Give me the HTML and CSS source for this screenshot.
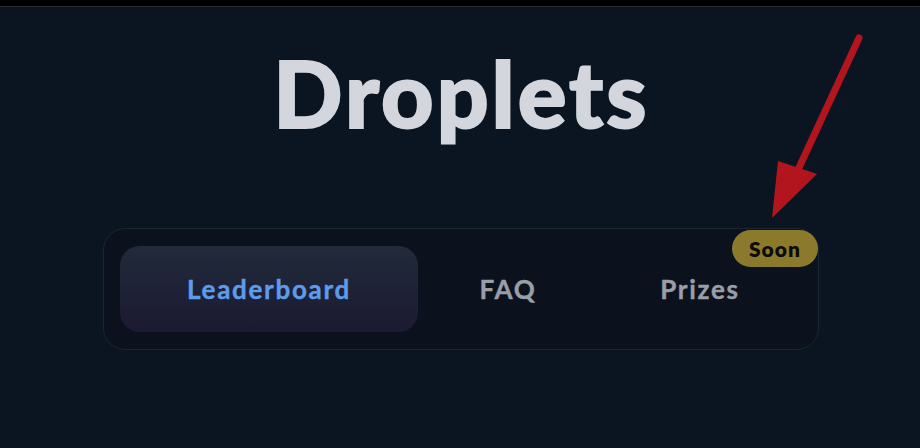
FILE: index.html
```html
<!DOCTYPE html>
<html lang="en">
<head>
  <meta charset="UTF-8" />
  <meta name="viewport" content="width=device-width, initial-scale=1.0"/>
  <title>Droplets</title>
  <link rel="stylesheet" href="styles.css">
</head>
<body>
  <div class="topbar"></div>

  <main class="page">
    <h1 class="title">Droplets</h1>

    <nav class="tabs">
      <a class="tab tab-wide active" href="#">Leaderboard</a>
      <a class="tab tab-narrow" href="#">FAQ</a>
      <a class="tab tab-mid" href="#">Prizes<span class="badge">Soon</span></a>
    </nav>
  </main>

  <!-- annotation arrow pointing at the badge -->
  <svg class="arrow" width="920" height="448" viewBox="0 0 920 448">
    <line x1="859" y1="38" x2="797" y2="172" stroke="#b3151f" stroke-width="7" stroke-linecap="round"/>
    <polygon points="778,161 817,174 772,218" fill="#b3151f"/>
  </svg>
</body>
</html>
```

FILE: styles.css
```css
* {
  box-sizing: border-box;
}
body {
  margin: 0;
  height: 448px;
  overflow: hidden;
  background: #0a1521;
  font-family: 'Lato', 'Inter', sans-serif;
}
.topbar {
  height: 7px;
  background: #000;
  border-bottom: 1px solid #2b2d30;
}
.page {
  display: flex;
  flex-direction: column;
  align-items: center;
}
.title {
  margin: 33px 0 0 3px;
  font-size: 91px;
  font-weight: 900;
  color: #d3d6dc;
  letter-spacing: 3px;
  line-height: 105px;
  -webkit-text-stroke: 2px #d3d6dc;
}
.tabs {
  display: flex;
  margin: 83px 0 0 2px;
  padding: 17px 16px;
  border: 1px solid #1c2531;
  border-radius: 22px;
  background: #0b121e;
}
.tab {
  position: relative;
  display: flex;
  align-items: center;
  justify-content: center;
  height: 86px;
  border-radius: 20px;
  text-decoration: none;
  font-size: 26px;
  font-weight: 700;
  letter-spacing: 1.7px;
  color: #9a9ea7;
  -webkit-text-stroke: 0.4px currentColor;
}
.tab-wide {
  width: 298px;
}
.tab-narrow {
  width: 180px;
}
.tab-mid {
  width: 204px;
}
.tab.active {
  color: #5d9ce9;
  background: linear-gradient(to bottom, #222a3b, #1b1a32);
}
.badge {
  position: absolute;
  top: -16px;
  right: -16px;
  padding: 6px 17px;
  border-radius: 20px;
  background: #8b7a2b;
  color: #0b0b0b;
  font-size: 21px;
  line-height: 25px;
  font-weight: 800;
  letter-spacing: 1px;
  -webkit-text-stroke: 0;
}
.arrow {
  position: absolute;
  top: 0;
  left: 0;
  pointer-events: none;
}
```
